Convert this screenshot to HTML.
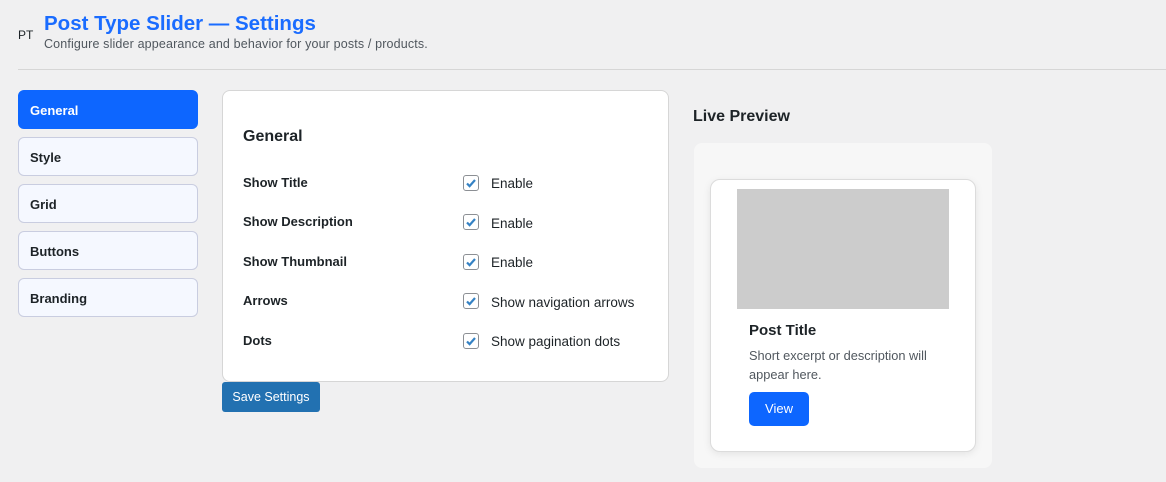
<!DOCTYPE html>
<html><head><meta charset="utf-8"><style>
*{box-sizing:border-box;margin:0;padding:0}
body{width:1166px;height:482px;background:#f0f0f1;font-family:"Liberation Sans",sans-serif;color:#1d2327;position:relative;overflow:hidden}
.a{position:absolute;white-space:nowrap}
.tab{position:absolute;left:18px;width:180px;height:39px;border:1px solid #c9cde0;border-radius:6px;background:#f5f8ff;font-size:13px;font-weight:bold;padding:12px 0 0 11px;color:#1d2327}
.lbl{position:absolute;left:243px;font-size:13px;font-weight:bold}
.cb{position:absolute;left:463px;width:16px;height:16px;border:1px solid #8c8f94;border-radius:3px;background:#fff}
.cb svg{position:absolute;left:1px;top:1px}
.en{position:absolute;left:491px;font-size:13.5px}
</style></head><body>
<div class="a" style="left:18px;top:28px;font-size:12px">PT</div>
<div class="a" style="left:44px;top:12px;font-size:20.5px;font-weight:bold;color:#1a6cff">Post Type Slider — Settings</div>
<div class="a" style="left:44px;top:37px;font-size:12.5px;color:#50575e;letter-spacing:.15px">Configure slider appearance and behavior for your posts / products.</div>
<div class="a" style="left:18px;top:69px;width:1148px;height:1px;background:#d6d6d6"></div>
<div class="tab" style="top:90px;background:#0d66ff;border-color:#0d66ff;color:#fff">General</div>
<div class="tab" style="top:137px">Style</div>
<div class="tab" style="top:184px">Grid</div>
<div class="tab" style="top:231px">Buttons</div>
<div class="tab" style="top:278px">Branding</div>
<div class="a" style="left:222px;top:90px;width:447px;height:292px;background:#fff;border:1px solid #d6d6d6;border-radius:8px"></div>
<div class="a" style="left:243px;top:128px;font-size:16px;font-weight:bold">General</div>
<div class="lbl" style="top:175px">Show Title</div>
<div class="lbl" style="top:214px">Show Description</div>
<div class="lbl" style="top:254px">Show Thumbnail</div>
<div class="lbl" style="top:293px">Arrows</div>
<div class="lbl" style="top:333px">Dots</div>
<div class="cb" style="top:175px"><svg width="12" height="12" viewBox="0 0 12 12"><path d="M2 6.5l2.6 2.6L10 3" fill="none" stroke="#3582c4" stroke-width="2.2"/></svg></div>
<div class="cb" style="top:214px"><svg width="12" height="12" viewBox="0 0 12 12"><path d="M2 6.5l2.6 2.6L10 3" fill="none" stroke="#3582c4" stroke-width="2.2"/></svg></div>
<div class="cb" style="top:254px"><svg width="12" height="12" viewBox="0 0 12 12"><path d="M2 6.5l2.6 2.6L10 3" fill="none" stroke="#3582c4" stroke-width="2.2"/></svg></div>
<div class="cb" style="top:293px"><svg width="12" height="12" viewBox="0 0 12 12"><path d="M2 6.5l2.6 2.6L10 3" fill="none" stroke="#3582c4" stroke-width="2.2"/></svg></div>
<div class="cb" style="top:333px"><svg width="12" height="12" viewBox="0 0 12 12"><path d="M2 6.5l2.6 2.6L10 3" fill="none" stroke="#3582c4" stroke-width="2.2"/></svg></div>
<div class="en" style="top:176px">Enable</div>
<div class="en" style="top:216px">Enable</div>
<div class="en" style="top:255px">Enable</div>
<div class="en" style="top:295px">Show navigation arrows</div>
<div class="en" style="top:334px">Show pagination dots</div>
<div class="a" style="left:222px;top:382px;width:98px;height:30px;background:#2271b1;border-radius:3px;color:#fff;font-size:12.5px;text-align:center;line-height:30px">Save Settings</div>
<div class="a" style="left:693px;top:108px;font-size:16px;font-weight:bold">Live Preview</div>
<div class="a" style="left:694px;top:143px;width:298px;height:325px;background:#f7f7f7;border-radius:8px"></div>
<div class="a" style="left:710px;top:179px;width:266px;height:273px;background:#fff;border:1px solid #dcdcdc;border-radius:10px;box-shadow:0 2px 8px rgba(0,0,0,.08)"></div>
<div class="a" style="left:737px;top:189px;width:212px;height:120px;background:#cccccc"></div>
<div class="a" style="left:749px;top:322px;font-size:15px;font-weight:bold">Post Title</div>
<div class="a" style="left:749px;top:346px;font-size:12.8px;color:#50575e;line-height:19px;white-space:normal;width:200px">Short excerpt or description will appear here.</div>
<div class="a" style="left:749px;top:392px;width:60px;height:34px;background:#0d66ff;border-radius:5px;color:#fff;font-size:13px;text-align:center;line-height:34px">View</div>
</body></html>
